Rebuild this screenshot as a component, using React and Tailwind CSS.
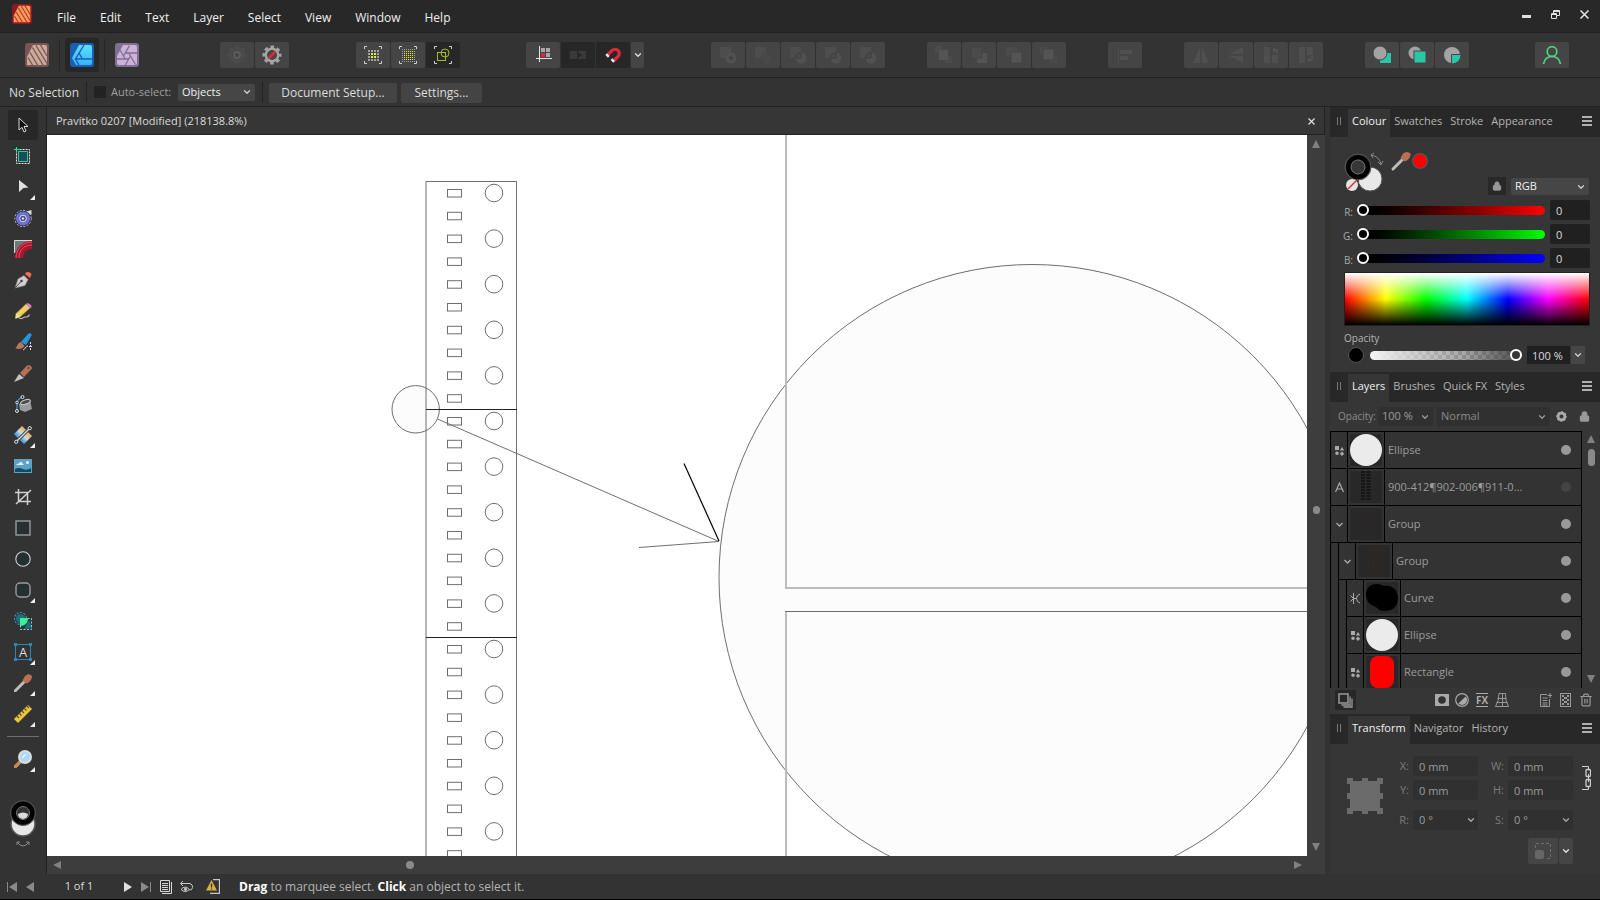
import React, { useState } from 'react';
import { ChevronDown, Lock, Trash2 } from 'lucide-react';

const menuItems = ['File', 'Edit', 'Text', 'Layer', 'Select', 'View', 'Window', 'Help'];

/* ---------- shared bits ---------- */

function ToolbarButton({ label, dark, children, narrow }) {
  return (
    <button
      aria-label={label}
      className={`h-[26px] flex items-center justify-center rounded-[2px] ${narrow ? 'w-[13px]' : 'w-[34px]'} ${
        dark ? 'bg-[#272727]' : 'bg-[#454545]'
      }`}
    >
      {children}
    </button>
  );
}

function Dropdown({ label, value, className, chevron = 'text-[#cfcfcf]' }) {
  return (
    <div className={`relative flex items-center rounded-[2px] ${className}`}>
      <select
        aria-label={label}
        defaultValue={value}
        className="appearance-none w-full h-full pl-1 pr-4 bg-transparent outline-none"
      >
        <option>{value}</option>
      </select>
      <ChevronDown className={`absolute right-[3px] w-2.5 h-2.5 pointer-events-none ${chevron}`} strokeWidth={3} />
    </div>
  );
}

function Arrow({ dir, className = 'fill-[#8a8a8a]' }) {
  const shapes = {
    up: '4,0 8,8 0,8',
    down: '0,0 8,0 4,8',
    left: '8,0 8,8 0,4',
    right: '0,0 8,4 0,8',
  };
  return (
    <svg width="8" height="8" viewBox="0 0 8 8" className={className}>
      <polygon points={shapes[dir]} />
    </svg>
  );
}

function PanelTabs({ tabs }) {
  return (
    <div className="h-[30px] shrink-0 flex items-end bg-[#282828] pr-2">
      <div className="w-[18px] h-7 pb-1 flex items-center justify-center gap-[2px]">
        <span className="w-px h-2 bg-[#777]" />
        <span className="w-px h-2 bg-[#777]" />
      </div>
      {tabs.map((tab, i) => (
        <button
          key={tab}
          className={`h-7 px-1 pb-1 text-[11px] whitespace-nowrap ${
            i === 0 ? 'bg-[#363636] text-[#f0f0f0]' : 'text-[#b4b4b4]'
          }`}
        >
          {tab}
        </button>
      ))}
      <button aria-label="Panel preferences" className="ml-auto h-7 pb-1 flex flex-col items-center justify-center gap-[2px]">
        <span className="w-2.5 h-[2px] bg-[#b0b0b0]" />
        <span className="w-2.5 h-[2px] bg-[#b0b0b0]" />
        <span className="w-2.5 h-[2px] bg-[#b0b0b0]" />
      </button>
    </div>
  );
}

/* ---------- persona logos ---------- */

function PublisherLogo({ size, bg, fg, line }) {
  return (
    <svg width={size} height={size} viewBox="0 0 24 24">
      <rect width="24" height="24" rx="3" fill={bg} />
      <path d="M8 2h12a2 2 0 0 1 2 2v16a2 2 0 0 1-2 2H2v-8z" fill={fg} />
      <path d="M7.500 4.500L18 22M5 9.500L12.500 22M11 2.500L22 20.500M3 14.500L7.500 22M15.500 2L22 13" stroke={line} strokeWidth="1.300" />
    </svg>
  );
}

function DesignerLogo() {
  return (
    <svg width="24" height="24" viewBox="0 0 24 24">
      <defs>
        <linearGradient id="designer" x1="0" y1="0" x2="0" y2="1">
          <stop offset="0" stopColor="#5fe0ff" />
          <stop offset="1" stopColor="#35b4f8" />
        </linearGradient>
      </defs>
      <rect width="24" height="24" rx="3" fill="#1a5fb4" />
      <path d="M9 2h11a2 2 0 0 1 2 2v16a2 2 0 0 1-2 2H6L2 15z" fill="url(#designer)" />
      <path d="M14 2L5.500 16H22M5.500 16L9 22M9 10l3.500 6" stroke="#1a5fb4" strokeWidth="1.400" fill="none" />
    </svg>
  );
}

function PhotoLogo() {
  return (
    <svg width="24" height="24" viewBox="0 0 24 24">
      <rect width="24" height="24" rx="3" fill="#7f6e96" />
      <path d="M8 2h12a2 2 0 0 1 2 2v16a2 2 0 0 1-2 2H4a2 2 0 0 1-2-2v-7z" fill="#ccb3d6" />
      <path
        d="M8.500 13L14.500 2.700M10.250 10H22M13.750 10l6.700 11.500M15.500 13l-5.200 9M13.750 16H2M10.250 16L5 7"
        stroke="#7f6e96"
        strokeWidth="1.300"
        fill="none"
      />
    </svg>
  );
}

/* ---------- toolbar icons ---------- */

function SelectionFrame({ children }) {
  return (
    <svg width="18" height="18" viewBox="0 0 18 18" fill="none">
      <path d="M.500 3V.500H3M15 .500h2.500V3M.500 15v2.500H3M17.500 15v2.500H15" stroke="#d0d0d0" />
      {children}
    </svg>
  );
}

function DotGrid({ count, size, pitch, start, from, to }) {
  const cells = [];
  for (let r = 0; r < count; r++) {
    for (let c = 0; c < count; c++) {
      const hot = r >= from && r <= to && c >= from && c <= to;
      cells.push(
        <rect
          key={`${r}-${c}`}
          x={start + c * pitch}
          y={start + r * pitch}
          width={size}
          height={size}
          fill={hot ? '#e3ee2c' : '#a0a0a0'}
        />
      );
    }
  }
  return <>{cells}</>;
}

function BooleanIcon({ kind }) {
  return (
    <svg width="18" height="18" viewBox="0 0 18 18">
      <rect x="1" y="1" width="11" height="11" fill="#4d4d4d" />
      <circle cx="12" cy="12" r="5.500" fill={kind === 'subtract' ? '#484848' : '#515151'} />
      {kind === 'add' && <path d="M12 9.500v5M9.500 12h5" stroke="#3c3c3c" strokeWidth="1.200" />}
      {kind !== 'add' && kind !== 'subtract' && <path d="M6.500 12h5.500V6.500a5.500 5.500 0 0 0-5.500 5.500z" fill="#4a4a4a" stroke="#3e3e3e" />}
    </svg>
  );
}

function OrderIcon({ kind }) {
  const front = '#545454';
  const back = '#4b4b4b';
  return (
    <svg width="18" height="18" viewBox="0 0 18 18">
      {kind === 0 && (
        <>
          <rect x="0" y="0" width="7" height="7" fill={back} />
          <rect x="10" y="10" width="7" height="7" fill={back} />
          <rect x="4" y="4" width="9" height="10" fill={front} />
        </>
      )}
      {kind === 1 && (
        <>
          <rect x="7" y="7" width="10" height="10" fill={front} />
          <rect x="1" y="1" width="11" height="11" fill={back} stroke="#454545" />
        </>
      )}
      {kind === 2 && (
        <>
          <rect x="1" y="1" width="11" height="10" fill={back} />
          <rect x="6" y="6" width="11" height="11" fill={front} stroke="#454545" />
        </>
      )}
      {kind === 3 && (
        <>
          <rect x="0" y="1" width="7" height="7" fill={back} />
          <rect x="10" y="10" width="7" height="7" fill={back} />
          <rect x="3" y="3" width="11" height="11" fill={front} stroke="#454545" />
        </>
      )}
    </svg>
  );
}

function FlipIcon({ kind }) {
  return (
    <svg width="18" height="18" viewBox="0 0 18 18" fill="#4f4f4f">
      {kind === 0 && <path d="M8 1v16H1zM10 1v16h7z" />}
      {kind === 1 && <path d="M16 1v7H2zM16 10v7L2 10z" />}
      {kind === 2 && (
        <>
          <path d="M2 1h6v16H2zM10 9h6v8h-6z" />
          <path d="M11 4h4v4M13 2l-2 2 2 2" fill="none" stroke="#5c5c5c" />
        </>
      )}
      {kind === 3 && (
        <>
          <path d="M2 1h6v16H2zM10 1h6v8h-6z" />
          <path d="M15 10v4h-4M13 12l-2 2 2 2" fill="none" stroke="#5c5c5c" />
        </>
      )}
    </svg>
  );
}

function GearIcon({ size = 20, className, width = 2.4, children }) {
  return (
    <svg width={size} height={size} viewBox="0 0 20 20" className={className}>
      <circle cx="10" cy="10" r="6.200" fill="none" stroke="currentColor" strokeWidth={width} />
      <circle cx="10" cy="10" r="8.300" fill="none" stroke="currentColor" strokeWidth="2.400" strokeDasharray="3.600 2.920" strokeDashoffset="1.800" />
      {children}
    </svg>
  );
}

function MainToolbar() {
  return (
    <div className="h-[45px] shrink-0 flex items-center pl-[25px] border-b border-[#222]">
      <button aria-label="Publisher persona">
        <PublisherLogo size={24} bg="#7b5355" fg="#c9aa9b" line="#7b5355" />
      </button>
      <span className="ml-[10px] w-px h-8 bg-[#262626]" />
      <button aria-label="Designer persona" className="ml-[5px] w-[34px] h-[34px] flex items-center justify-center rounded-[3px] bg-[#272727]">
        <DesignerLogo />
      </button>
      <span className="ml-[5px] w-px h-8 bg-[#262626]" />
      <button aria-label="Photo persona" className="ml-[10px]">
        <PhotoLogo />
      </button>

      <div className="ml-[81px] flex gap-px">
        <ToolbarButton label="Defaults">
          <GearIcon className="text-[#4b4b4b]">
            <circle cx="10" cy="10" r="4.500" fill="#4b4b4b" />
            <circle cx="10" cy="10" r="3" fill="#454545" stroke="#5a5a5a" strokeWidth="2" />
          </GearIcon>
        </ToolbarButton>
        <ToolbarButton label="Revert defaults">
          <GearIcon className="text-[#a6a6a6]">
            <path d="M7.500 12.500l5-5" stroke="#e0283c" strokeWidth="2.600" strokeLinecap="round" />
          </GearIcon>
        </ToolbarButton>
      </div>

      <div className="ml-[67px] flex gap-px">
        <ToolbarButton label="Show grid">
          <SelectionFrame>
            <DotGrid count={4} size={2} pitch={3} start={4} from={1} to={2} />
          </SelectionFrame>
        </ToolbarButton>
        <ToolbarButton label="Pixel grid">
          <SelectionFrame>
            <DotGrid count={7} size={1} pitch={2} start={3} from={1} to={5} />
          </SelectionFrame>
        </ToolbarButton>
        <ToolbarButton label="Select objects" dark>
          <SelectionFrame>
            <rect x="3.500" y="6.500" width="8" height="8" stroke="#a5bb2a" />
            <circle cx="11" cy="7" r="4" stroke="#a5bb2a" />
          </SelectionFrame>
        </ToolbarButton>
      </div>

      <div className="ml-[66px] flex gap-px">
        <ToolbarButton label="Transform origin">
          <svg width="18" height="18" viewBox="0 0 18 18">
            <path d="M5.500 0v16M2 12.500h16" stroke="#e4e4e4" />
            <path d="M7 2h4v4H7zM12 2h4v4h-4zM12 7h4v4h-4z" fill="#a8a8a8" />
            <path d="M7 7h4v4H7z" fill="#e0283c" />
          </svg>
        </ToolbarButton>
        <ToolbarButton label="Move by whole pixels" dark>
          <svg width="18" height="18" viewBox="0 0 18 18">
            <path d="M1 5h7v8H1zM9 5h8v8H9z" fill="#3a3a3a" />
            <path d="M9 6l4 3-4 3z" fill="#272727" />
          </svg>
        </ToolbarButton>
        <ToolbarButton label="Snapping" dark>
          <svg width="18" height="18" viewBox="0 0 18 18" fill="none">
            <path d="M4 8.500L8 4.500a4.200 4.200 0 0 1 6 6L9.500 15" stroke="#e0283c" strokeWidth="3.200" />
            <path d="M2.200 8.200l2.600 2.600M7.500 13.200l2.600 2.600" stroke="#e8e8e8" strokeWidth="2.400" />
          </svg>
        </ToolbarButton>
        <ToolbarButton label="Snapping options" narrow>
          <ChevronDown className="w-2.5 h-2.5 text-[#e0e0e0]" strokeWidth={3} />
        </ToolbarButton>
      </div>

      <div className="ml-[67px] flex gap-px">
        {['add', 'subtract', 'intersect', 'xor', 'divide'].map((kind) => (
          <ToolbarButton key={kind} label={kind}>
            <BooleanIcon kind={kind} />
          </ToolbarButton>
        ))}
      </div>

      <div className="ml-[42px] flex gap-px">
        {['Move to back', 'Back one', 'Forward one', 'Move to front'].map((label, i) => (
          <ToolbarButton key={label} label={label}>
            <OrderIcon kind={i} />
          </ToolbarButton>
        ))}
      </div>

      <div className="ml-[42px] flex">
        <ToolbarButton label="Alignment">
          <svg width="18" height="18" viewBox="0 0 18 18">
            <path d="M2.500 1v16" stroke="#4f4f4f" />
            <path d="M4 4h12v4H4zM4 10h8v4H4z" fill="#505050" />
          </svg>
        </ToolbarButton>
      </div>

      <div className="ml-[42px] flex gap-px">
        {['Flip horizontal', 'Flip vertical', 'Rotate left', 'Rotate right'].map((label, i) => (
          <ToolbarButton key={label} label={label}>
            <FlipIcon kind={i} />
          </ToolbarButton>
        ))}
      </div>

      <div className="ml-[42px] flex gap-px">
        <ToolbarButton label="Insert behind">
          <svg width="18" height="18" viewBox="0 0 18 18">
            <rect x="7" y="7" width="11" height="10" fill="#29c7a6" />
            <circle cx="7" cy="7" r="7" fill="#a3a3a3" stroke="#454545" />
          </svg>
        </ToolbarButton>
        <ToolbarButton label="Insert on top">
          <svg width="18" height="18" viewBox="0 0 18 18">
            <circle cx="7" cy="7" r="6.500" fill="#a3a3a3" />
            <rect x="6" y="5" width="12" height="12" fill="#29c7a6" stroke="#454545" />
          </svg>
        </ToolbarButton>
        <ToolbarButton label="Insert inside">
          <svg width="18" height="18" viewBox="0 0 18 18">
            <circle cx="9" cy="9" r="8" fill="#a3a3a3" />
            <path d="M8.500 8.500H18a9 9 0 0 1-9.500 9.500z" fill="#29c7a6" stroke="#454545" />
          </svg>
        </ToolbarButton>
      </div>

      <div className="ml-auto mr-[31px]">
        <ToolbarButton label="Account">
          <svg width="20" height="20" viewBox="0 0 20 20" fill="none" stroke="#4fd184" strokeWidth="1.700">
            <circle cx="10" cy="6.500" r="4.800" />
            <path d="M1.500 19c1-5 4-7.500 8.500-7.500s7.500 2.500 8.500 7.500" />
          </svg>
        </ToolbarButton>
      </div>
    </div>
  );
}

function ContextBar() {
  return (
    <div className="h-[29px] shrink-0 flex items-center pl-[9px] border-b border-[#222] text-xs text-[#dcdcdc]">
      <span className="w-[77px] pt-px whitespace-nowrap">No Selection</span>
      <span className="w-px h-5 bg-[#222]" />
      <label className="ml-[7px] flex items-center gap-[5px] text-[#a0a0a0] whitespace-nowrap w-[78px] text-[11px]">
        <input type="checkbox" className="appearance-none w-3 h-3 bg-[#222] rounded-[1px] shrink-0" />
        Auto-select:
      </label>
      <Dropdown label="Auto-select" value="Objects" className="ml-[6px] w-[77px] h-[17px] bg-[#464646] text-[#f0f0f0] text-[11px]" />
      <span className="ml-[7px] w-px h-5 bg-[#222]" />
      <button className="ml-[6px] mt-px w-32 h-5 bg-[#444] rounded-[2px]">Document Setup...</button>
      <button className="ml-1 mt-px w-[81px] h-5 bg-[#444] rounded-[2px]">Settings...</button>
    </div>
  );
}

/* ---------- tools column ---------- */

const tools = [
  {
    name: 'Move',
    active: true,
    icon: <path d="M5 2v12l3-2.700 2 4.700 2-1-2-4.500h4z" fill="#111" stroke="#d8d8d8" />,
  },
  {
    name: 'Artboard',
    icon: (
      <>
        <rect x="2.500" y="2.500" width="13" height="14" fill="none" stroke="#e6e6e6" strokeDasharray="2 1" />
        <rect x="4.500" y="4.500" width="9" height="10" fill="#1b4d59" stroke="#29c7a6" />
        <path d="M2.500 0v5M0 2.500h5" stroke="#29e0a6" />
      </>
    ),
  },
  { name: 'Node', flyout: true, icon: <path d="M5 2l9.500 7.500-5 .5-4.500 4z" fill="#e0e0e0" /> },
  {
    name: 'Point transform',
    icon: (
      <>
        <circle cx="9" cy="9.500" r="8.200" fill="none" stroke="#c0c0c0" strokeDasharray="2 1.500" />
        <circle cx="9" cy="9.500" r="7" fill="#6a70e0" />
        <circle cx="9" cy="9.500" r="3.300" fill="#4e4e60" stroke="#d8d8e8" />
        <circle cx="9" cy="9.500" r="1.200" fill="#d8d8e8" />
        <path d="M12.500 2.500l5-1.500v5z" fill="#ddd" />
      </>
    ),
  },
  {
    name: 'Corner',
    icon: (
      <>
        <path d="M.500 13V.500H18" fill="#6b7a7a" stroke="#d8d8d8" />
        <path d="M1 18C1 8 8 1 18 1v8c-5 0-9 4-9 9z" fill="#a8172c" />
        <path d="M2 18C2 9 9 2 18 2M5 18C5 10 10 5 18 5" fill="none" stroke="#ea4a5c" />
      </>
    ),
  },
  {
    name: 'Pen',
    icon: (
      <>
        <path d="M1 17l3-9 6-3.500 4 4-3 6z" fill="#cfcfcf" stroke="#8b8b8b" strokeWidth=".6" />
        <path d="M1 17l6-6.500" stroke="#444" />
        <circle cx="7.500" cy="10" r="1.300" fill="#444" />
        <path d="M12 1.500c2-1.500 5 0 5.500 2L16 7l-5-4z" fill="#ff6b4f" />
      </>
    ),
  },
  {
    name: 'Pencil',
    icon: (
      <>
        <path d="M5 16c4 2 4-1.500 7-1 2 0 3-1 3.500-2.500" fill="none" stroke="#aaa" strokeWidth="1.200" />
        <path d="M2 11.500L12 2l4 4-10 9-4.500 1.500z" fill="#ecd25c" stroke="#a98d2c" strokeWidth=".6" />
        <path d="M2 11.500l4 3.500-4.500 1.500z" fill="#f0dcc0" />
        <path d="M12 2c1-2 6 .500 5.500 3L16 6.500z" fill="#e07ad8" />
      </>
    ),
  },
  {
    name: 'Vector brush',
    icon: (
      <>
        <path d="M7 9L14 1c2-1.500 4-.5 3.500 1.500L12 12z" fill="#2196e3" />
        <path d="M1 15c3-.5 1-4.500 6-6l3.500 4c-2 3-6 4-9.500 2z" fill="#b9775a" />
        <path d="M9 17c2 0 2-4 5-4" fill="none" stroke="#ccc" />
        <path d="M16.500 9v9" stroke="#ddd" strokeDasharray="2 1" />
        <path d="M15 13.500h3" stroke="#ddd" />
      </>
    ),
  },
  {
    name: 'Knife',
    icon: (
      <>
        <path d="M0 18l5-8 5 4z" fill="#c4c4c4" />
        <path d="M6 9l7-7.500c2-1 5 0 5 3L10 13z" fill="#b5714f" />
        <circle cx="14.500" cy="4" r="1" fill="#444" />
      </>
    ),
  },
  {
    name: 'Fill bucket',
    icon: (
      <>
        <path d="M5 9l11-4 2 9-7 3-5-2z" fill="#9a9a9a" />
        <ellipse cx="11.500" cy="7" rx="5" ry="2.200" transform="rotate(-18 11.500 7)" fill="#4c4c4c" stroke="#d0d0d0" />
        <path d="M3 15V8q0-3 5-6" fill="none" stroke="#3b8fc4" strokeWidth="1.400" />
        <circle cx="3" cy="16" r="1.500" fill="#333" stroke="#ddd" />
        <circle cx="3" cy="7.500" r="1.300" fill="#333" stroke="#ddd" />
        <circle cx="8.500" cy="2" r="1.500" fill="#333" stroke="#ddd" />
      </>
    ),
  },
  {
    name: 'Gradient',
    flyout: true,
    icon: (
      <>
        <defs>
          <linearGradient id="strip" x1="0" y1="1" x2="1" y2="0">
            <stop offset=".25" stopColor="#4da8e6" />
            <stop offset=".5" stopColor="#cfdbe0" />
            <stop offset=".75" stopColor="#e8b77c" />
          </linearGradient>
        </defs>
        <path d="M0 8l8-8 4 4-8 8z" fill="url(#strip)" />
        <path d="M6 14l8-8 4 4-8 8z" fill="url(#strip)" />
        <path d="M3 15L15 3" stroke="#444" strokeWidth="3" />
        <path d="M3 15L15 3" stroke="#ddd" strokeWidth="1.200" />
        <circle cx="2.200" cy="15.800" r="1.600" fill="#333" stroke="#ddd" />
        <circle cx="15.800" cy="2.200" r="1.600" fill="#333" stroke="#ddd" />
      </>
    ),
  },
  {
    name: 'Place image',
    icon: (
      <>
        <rect x="0" y="2" width="18" height="14" fill="#5ba2c6" />
        <path d="M2 8q1-2 3-1.500Q7 3 9 7l1 1z" fill="#e4e9ec" />
        <circle cx="13.500" cy="5.500" r="1.500" fill="#f2f2f2" />
        <path d="M1 12q4-2 8 0t8-1v4H1z" fill="#134b63" />
      </>
    ),
  },
  {
    name: 'Crop',
    icon: <path d="M4.500 1v12.500H17M1 4.500h12.500V17M2 16L17 2" fill="none" stroke="#d0d0d0" strokeWidth="1.500" />,
  },
  { name: 'Rectangle', icon: <rect x="2" y="2" width="14" height="14" fill="#243032" stroke="#9a9a9a" strokeWidth="1.400" /> },
  { name: 'Ellipse', icon: <circle cx="9" cy="9" r="7.200" fill="#243032" stroke="#d0d0d0" strokeWidth="1.100" /> },
  {
    name: 'Rounded rectangle',
    flyout: true,
    icon: <rect x="2" y="2" width="14" height="14" rx="4" fill="#243032" stroke="#9a9a9a" strokeWidth="1.400" />,
  },
  {
    name: 'Shape builder',
    icon: (
      <>
        <path d="M15 8l3 8-8 1z" fill="#1d6f80" />
        <circle cx="6.500" cy="6.500" r="4.500" fill="#1d6f80" />
        <circle cx="6.500" cy="6.500" r="6" fill="none" stroke="#3f93b4" strokeWidth="1.200" strokeDasharray="2 1.400" />
        <rect x="6.500" y="6.500" width="11" height="11" fill="none" stroke="#8fd0f4" strokeDasharray="2 1.500" />
        <path d="M6 14V6h8c0 5-3 8-8 8z" fill="#3bf193" />
      </>
    ),
  },
  {
    name: 'Artistic text',
    flyout: true,
    icon: (
      <>
        <rect x="1.500" y="1.500" width="15" height="15" fill="none" stroke="#2c86b8" />
        <path d="M0 0h3v3H0zM15 0h3v3h-3zM0 15h3v3H0zM15 15h3v3h-3z" fill="#2c86b8" />
        <text x="9" y="13.500" textAnchor="middle" fontSize="13" fill="#dcdcdc">A</text>
      </>
    ),
  },
  {
    name: 'Colour picker',
    flyout: true,
    icon: (
      <>
        <path d="M1 17l9-9" stroke="#bcbcbc" strokeWidth="3" strokeLinecap="round" />
        <path d="M8.500 6.500L11 2q4-3.500 7 0c0 4-3 7-6 7.500z" fill="#b87252" />
      </>
    ),
  },
  {
    name: 'Measure',
    flyout: true,
    icon: (
      <>
        <path d="M0 14L14 0l4 4L4 18z" fill="#e9c63f" />
        <path d="M3 11l2 2M5.500 8.500l2 2M8 6l2 2M10.500 3.500l2 2M13 1l2 2" stroke="#5a4a12" strokeWidth="1.200" />
      </>
    ),
  },
];

function ToolButton({ name, icon, flyout, active }) {
  return (
    <button
      aria-label={name}
      className={`relative w-[30px] h-[30px] shrink-0 flex items-center justify-center rounded-[3px] ${active ? 'bg-[#272727]' : ''}`}
    >
      <svg width="18" height="18" viewBox="0 0 18 18">
        {icon}
      </svg>
      {flyout && (
        <svg width="5" height="5" viewBox="0 0 5 5" className="absolute right-[3px] bottom-[2px]">
          <path d="M5 0v5H0z" fill="#f0f0f0" />
        </svg>
      )}
    </button>
  );
}

function ToolsColumn() {
  return (
    <div className="w-[47px] shrink-0 flex flex-col items-center gap-px pt-[3px] border-r border-[#222] overflow-hidden">
      {tools.map((tool) => (
        <ToolButton key={tool.name} {...tool} />
      ))}
      <span className="mt-[6px] mb-[6px] w-8 h-px shrink-0 bg-[#6e6e6e]" />
      <ToolButton
        name="Zoom"
        flyout
        icon={
          <>
            <path d="M1 17l5-5" stroke="#c48a55" strokeWidth="3.500" strokeLinecap="round" />
            <circle cx="11" cy="7" r="6" fill="#a8d8fa" stroke="#dcdcdc" strokeWidth="2" />
            <path d="M8 8l4-4" stroke="#e8f6ff" strokeWidth="1.500" />
          </>
        }
      />
      <button aria-label="Stroke and fill" className="mt-6">
        <svg width="28" height="52" viewBox="0 0 28 52">
          <circle cx="14" cy="25" r="12" fill="#e8e8e8" stroke="#555" strokeWidth="1.500" />
          <circle cx="14" cy="14" r="12.500" fill="#333" stroke="#555" />
          <circle cx="14" cy="14" r="9" fill="#333" stroke="#000" strokeWidth="5" />
          <path d="M9 15q5-3 10 0a5 5 0 0 1-10 0z" fill="#ddd" />
          <circle cx="14" cy="14" r="6.500" fill="none" stroke="#777" />
          <path d="M8 43q6 8 12 0M8 46v-3h3M17 43h3v3" fill="none" stroke="#8a8a8a" />
        </svg>
      </button>
    </div>
  );
}

/* ---------- document ---------- */

function Artwork() {
  const slots = Array.from({ length: 30 }, (_, i) => 54.5 + i * 22.8);
  const holes = Array.from({ length: 15 }, (_, i) => 58 + i * 45.6);
  return (
    <svg width="100%" height="100%" fill="none" stroke="#6e6e6e" className="block">
      <circle cx="985" cy="442.500" r="313" fill="#fcfcfc" />
      <circle cx="368.700" cy="274.300" r="23.700" fill="#fcfcfc" />
      <path d="M739 0v453h2000" stroke="#bcbcbc" strokeWidth="2" />
      <path d="M739 2000V476" stroke="#bcbcbc" strokeWidth="2" />
      <path d="M738 476.500h2000" />
      <path d="M379 2000V46.500h90.500V2000" />
      <path d="M379 274.500h91M379 502.500h91" stroke="#222" />
      {slots.map((y) => (
        <rect key={y} x="400.500" y={y} width="14" height="7.500" />
      ))}
      {holes.map((y) => (
        <circle key={y} cx="447" cy={y} r="8.800" />
      ))}
      <path d="M390.500 284L672 406.500L592 412.500" />
      <path d="M637 328.500L672 406" stroke="#000" strokeWidth="1.200" />
    </svg>
  );
}

function DocumentArea() {
  return (
    <div className="flex-1 min-w-0 flex flex-col">
      <div className="h-7 shrink-0 flex items-center justify-between pl-[9px] pr-[9px] pt-[2px] bg-[#363636] border-b border-r border-[#222] text-[11px] text-[#dcdcdc]">
        <span>Pravítko 0207 [Modified] (218138.8%)</span>
        <button aria-label="Close document">
          <svg width="7" height="7" viewBox="0 0 7 7" stroke="#e0e0e0" strokeWidth="1.200">
            <path d="M.500.500l6 6M6.500.500l-6 6" />
          </svg>
        </button>
      </div>
      <div className="flex-1 min-h-0 flex">
        <main className="flex-1 min-w-0 bg-white overflow-hidden">
          <Artwork />
        </main>
        <div className="w-[18px] shrink-0 flex flex-col items-center py-[5px] bg-[#3d3d3d]">
          <button aria-label="Scroll up"><Arrow dir="up" className="fill-[#808080] block" /></button>
          <span className="h-[calc(50%+2px)]" />
          <span className="w-[7px] h-2 rounded-full bg-[#8a8a8a]" />
          <button aria-label="Scroll down" className="mt-auto"><Arrow dir="down" className="fill-[#808080] block" /></button>
        </div>
      </div>
      <div className="h-[18px] shrink-0 flex items-center pl-[6px] pr-[23px] bg-[#3d3d3d]">
        <button aria-label="Scroll left"><Arrow dir="left" className="fill-[#808080] block" /></button>
        <span className="w-[calc(28%-5px)]" />
        <span className="w-2 h-2 rounded-full bg-[#8a8a8a]" />
        <button aria-label="Scroll right" className="ml-auto"><Arrow dir="right" className="fill-[#808080] block" /></button>
      </div>
    </div>
  );
}

/* ---------- colour panel ---------- */

function ChannelSlider({ id, track, value, onChange }) {
  return (
    <div className="h-6 flex items-center">
      <label htmlFor={`channel-${id}`} className="w-[23px] pt-1 text-right text-[10px] text-[#a8a8a8]">
        {id}:
      </label>
      <input
        id={`channel-${id}`}
        type="range"
        min="0"
        max="255"
        value={value}
        onChange={(e) => onChange(Number(e.target.value))}
        className={`appearance-none ml-1 flex-1 min-w-0 h-[9px] rounded-full bg-linear-to-r from-black ${track} [&::-webkit-slider-thumb]:appearance-none [&::-webkit-slider-thumb]:w-3 [&::-webkit-slider-thumb]:h-3 [&::-webkit-slider-thumb]:rounded-full [&::-webkit-slider-thumb]:border-2 [&::-webkit-slider-thumb]:border-white [&::-webkit-slider-thumb]:bg-black`}
      />
      <input
        aria-label={`${id} value`}
        value={value}
        onChange={(e) => onChange(Number(e.target.value) || 0)}
        className="ml-[5px] w-10 h-5 pl-[6px] rounded-[2px] bg-[#202020] text-[11px] text-[#dcdcdc]"
      />
    </div>
  );
}

function ColourPanel() {
  const [rgb, setRgb] = useState({ R: 0, G: 0, B: 0 });
  const tracks = { R: 'to-[#ff0000]', G: 'to-[#00ff00]', B: 'to-[#0000ff]' };

  return (
    <section className="shrink-0 pb-2">
      <PanelTabs tabs={['Colour', 'Swatches', 'Stroke', 'Appearance']} />
      <div className="pr-[10px]">
        <div className="h-[61px] flex items-end pl-[14px] pr-px">
          <svg width="86" height="46" viewBox="0 0 86 46" className="mb-[2px]">
            <circle cx="26" cy="29" r="12" fill="#e8e8e8" stroke="#555" />
            <circle cx="14" cy="17" r="13" fill="#363636" stroke="#555" />
            <circle cx="14" cy="17" r="9.500" fill="#363636" stroke="#000" strokeWidth="5" />
            <circle cx="14" cy="17" r="7" fill="none" stroke="#777" />
            <circle cx="8" cy="35" r="6" fill="#e4e4e4" />
            <path d="M4 39l8-8" stroke="#e0283c" strokeWidth="1.500" />
            <path d="M27 5q8 1 10 9M30 3l-3 2 2 3M34 12l3 3 2-4" fill="none" stroke="#8a8a8a" />
            <path d="M49 19l9-9" stroke="#bcbcbc" strokeWidth="3" strokeLinecap="round" />
            <path d="M56.500 8L59 3.500q4-3 7.500 0c.500 4-3 7-6 8z" fill="#b87252" />
            <circle cx="76" cy="11" r="8" fill="#555" />
            <circle cx="76" cy="11" r="6.800" fill="#f00" />
          </svg>
          <button aria-label="Lock colour" className="ml-auto w-[18px] h-[18px] mb-[3px] flex items-center justify-center bg-[#282828]">
            <Lock className="w-2.5 h-2.5 text-[#999] fill-[#999]" strokeWidth={2} />
          </button>
          <Dropdown label="Colour mode" value="RGB" className="ml-[5px] mb-[3px] w-[78px] h-[17px] bg-[#464646] text-[#f0f0f0] text-[11px]" />
        </div>
        {Object.keys(tracks).map((id) => (
          <ChannelSlider key={id} id={id} track={tracks[id]} value={rgb[id]} onChange={(v) => setRgb({ ...rgb, [id]: v })} />
        ))}
        <div className="mt-[2px] ml-[14px] h-[54px] border border-[#222] bg-[linear-gradient(to_bottom,#fff_0%,transparent_50%,#000_100%),linear-gradient(to_right,#f00,#ff0,#0f0,#0ff,#00f,#f0f,#f00)]" />
        <label htmlFor="opacity" className="mt-1 ml-[14px] block text-[10px] leading-4 text-[#b4b4b4]">
          Opacity
        </label>
        <div className="h-[18px] flex items-center pl-[18px] pr-[5px]">
          <span className="w-4 h-4 rounded-full border border-[#555] bg-black" />
          <input
            id="opacity"
            type="range"
            defaultValue="100"
            className="appearance-none ml-[6px] flex-1 min-w-0 h-[9px] rounded-full bg-[linear-gradient(to_right,#f4f4f4,#f4f4f433_60%,#363636cc),repeating-conic-gradient(#999_0_25%,#777_0_50%)] bg-[length:100%_100%,8px_8px] [&::-webkit-slider-thumb]:appearance-none [&::-webkit-slider-thumb]:w-3 [&::-webkit-slider-thumb]:h-3 [&::-webkit-slider-thumb]:rounded-full [&::-webkit-slider-thumb]:border-2 [&::-webkit-slider-thumb]:border-white [&::-webkit-slider-thumb]:bg-[#363636]"
          />
          <input aria-label="Opacity value" defaultValue="100 %" className="ml-[5px] w-[43px] h-[18px] pl-[5px] bg-[#202020] text-[11px] text-[#dcdcdc]" />
          <button aria-label="Opacity options" className="ml-px w-[14px] h-[18px] flex items-center justify-center bg-[#464646]">
            <ChevronDown className="w-2.5 h-2.5 text-[#cfcfcf]" strokeWidth={3} />
          </button>
        </div>
      </div>
    </section>
  );
}

/* ---------- layers panel ---------- */

const shapeIcon = <path d="M1 1h4v4H1zM8 2l2.200 3.500H5.800zM3 6.500a1.800 1.800 0 1 1 0 3.600 1.800 1.800 0 0 1 0-3.600zM8 6.500l2.200 2.200L8 11 5.800 8.700z" fill="#aaa" />;
const chevronIcon = <path d="M2.500 4l3 3 3-3" fill="none" stroke="#aaa" strokeWidth="1.300" />;

const layers = [
  { name: 'Ellipse', depth: 0, icon: shapeIcon, thumb: <circle cx="16" cy="16" r="16" fill="#ebebeb" /> },
  {
    name: '900-412¶902-006¶911-0...',
    depth: 0,
    hidden: true,
    icon: <path d="M1.500 10L5.500 1l4 9M3 7h5" fill="none" stroke="#aaa" strokeWidth="1.200" />,
    thumb: <path d="M13 0v30M18.500 0v30" stroke="#161616" strokeWidth="4" strokeDasharray="2 1" />,
  },
  { name: 'Group', depth: 0, icon: chevronIcon, thumb: <path d="M15.500 0v32" stroke="#302424" /> },
  {
    name: 'Group',
    depth: 1,
    icon: chevronIcon,
    thumb: <path d="M10.500 0v32M22.500 0v32M14.500 1v31M19.500 3v29" stroke="#402222" strokeDasharray="3 2" />,
  },
  {
    name: 'Curve',
    depth: 2,
    icon: <path d="M10 1Q6.500 2 6.500 5.500T10 10M3.500 0v11M3.500 5.500h3M.500 2.500l3 3-3 3" fill="none" stroke="#aaa" />,
    thumb: <path d="M0 13C0 5 5 2 11 2q4 0 7 2c8-1 14 4 14 12s-5 13-13 13q-6 0-9-4Q0 22 0 13z" fill="#000" />,
  },
  { name: 'Ellipse', depth: 2, icon: shapeIcon, thumb: <circle cx="16" cy="16" r="16" fill="#ebebeb" /> },
  { name: 'Rectangle', depth: 2, icon: shapeIcon, thumb: <rect x="4" width="24" height="32" rx="8" fill="#f00" /> },
];

function LayerRow({ name, depth, icon, thumb, hidden }) {
  return (
    <li className="h-[37px] shrink-0 flex border-l border-black">
      {Array.from({ length: depth }, (_, i) => (
        <span key={i} className="w-2 h-full shrink-0 border-r border-black" />
      ))}
      <div className="flex-1 min-w-0 flex items-center border-b border-black">
        <span className="w-[17px] h-full shrink-0 flex items-center justify-center border-r border-black">
          <svg width="11" height="11" viewBox="0 0 11 11">{icon}</svg>
        </span>
        <span className="w-[37px] h-full shrink-0 flex items-center justify-center border-r border-black">
          <svg width="32" height="32" viewBox="0 0 32 32" className="bg-[#282828]">{thumb}</svg>
        </span>
        <span className="pl-[3px] flex-1 min-w-0 whitespace-nowrap text-[11px] text-[#9c9c9c]">{name}</span>
        <button
          aria-label={`Toggle ${name}`}
          className={`mr-[10px] w-[10px] h-[10px] shrink-0 rounded-full ${hidden ? 'bg-[#444]' : 'bg-[#999]'}`}
        />
      </div>
    </li>
  );
}

function LayersPanel() {
  return (
    <section className="flex-1 min-h-0 flex flex-col">
      <PanelTabs tabs={['Layers', 'Brushes', 'Quick FX', 'Styles']} />
      <div className="h-[29px] shrink-0 flex items-center pl-2 pr-[10px] text-[11px] text-[#8c8c8c]">
        <span className="w-10 text-[10px]">Opacity:</span>
        <Dropdown label="Layer opacity" value="100 %" chevron="text-[#999]" className="w-[55px] h-[19px] bg-[#303030] text-[#9c9c9c]" />
        <Dropdown label="Blend mode" value="Normal" chevron="text-[#999]" className="ml-1 flex-1 min-w-0 h-[19px] bg-[#303030]" />
        <button aria-label="Blend ranges" className="ml-[6px]">
          <GearIcon size={11} width={5} className="text-[#aaa]" />
        </button>
        <button aria-label="Lock layer" className="ml-[12px]">
          <Lock className="w-[11px] h-[11px] text-[#999] fill-[#999]" strokeWidth={2.5} />
        </button>
      </div>
      <div className="flex-1 min-h-0 flex">
        <ul className="flex-1 min-w-0 flex flex-col overflow-hidden border-t border-r border-black bg-[#333]">
          {layers.map((layer, i) => (
            <LayerRow key={i} {...layer} />
          ))}
        </ul>
        <div className="w-[18px] flex flex-col items-center pt-1 pb-[5px]">
          <button aria-label="Scroll layers up"><Arrow dir="up" className="fill-[#808080] block" /></button>
          <span className="mt-[6px] w-[7px] h-[17px] rounded-full bg-[#8a8a8a]" />
          <button aria-label="Scroll layers down" className="mt-auto"><Arrow dir="down" className="fill-[#808080] block" /></button>
        </div>
      </div>
      <div className="h-[26px] shrink-0 flex items-center pl-[5px] pr-[7px] pb-[2px]">
        <button aria-label="Edit all layers" className="w-[21px] h-5 flex items-center justify-center bg-[#272727]">
          <svg width="15" height="15" viewBox="0 0 15 15" fill="none" stroke="#999">
            <path d="M5.500 14H14V5.500M3.500 12H12V3.500" strokeWidth="1.300" />
            <rect x="1" y="1" width="9" height="9" strokeWidth="1.500" />
          </svg>
        </button>
        <div className="ml-auto flex items-center gap-[6px]">
          <button aria-label="Mask layer">
            <svg width="14" height="14" viewBox="0 0 14 14"><rect y="1" width="14" height="12" fill="#aaa" /><circle cx="7" cy="7" r="3.800" fill="#333" /></svg>
          </button>
          <button aria-label="Adjustments">
            <svg width="14" height="14" viewBox="0 0 14 14"><circle cx="7" cy="7" r="6.300" fill="none" stroke="#aaa" strokeWidth="1.200" /><path d="M10.600 3.400a5 5 0 0 1-7.200 7.200z" fill="#aaa" /></svg>
          </button>
          <button aria-label="Layer effects">
            <svg width="14" height="14" viewBox="0 0 14 14">
              <path d="M1 .500h12M1 13.500h12" stroke="#aaa" />
              <text x="7" y="11" textAnchor="middle" fontSize="10" fontWeight="700" fill="#aaa">FX</text>
            </svg>
          </button>
          <button aria-label="Live filters">
            <svg width="14" height="14" viewBox="0 0 14 14" fill="none" stroke="#999">
              <path d="M4 .500h6.500Q10 8 13.500 13.500H.500Q4 8 4 .500zM7.500.500v13M2.500 5.500h9M1.500 9.500h11" />
            </svg>
          </button>
        </div>
        <div className="ml-[31px] flex items-center gap-[8px]">
          <button aria-label="Add layer">
            <svg width="12" height="14" viewBox="0 0 12 14" fill="none" stroke="#999"><path d="M7 1.500H.500v12h9V6M2.500 5h5M2.500 7.500h5M2.500 10h5M2.500 12h5M10 0v5M7.500 2.500h5" /></svg>
          </button>
          <button aria-label="Add pixel layer">
            <svg width="11" height="14" viewBox="0 0 11 14"><rect x=".5" y=".5" width="10" height="13" fill="none" stroke="#999" /><path d="M2 2h2v2H2zM7 2h2v2H7zM4 4h3v2H4zM2 6h2v2H2zM7 6h2v2H7zM4 8h3v2H4zM2 10h2v2H2zM7 10h2v2H7z" fill="#999" /></svg>
          </button>
          <button aria-label="Delete layer">
            <Trash2 className="w-[14px] h-[14px] text-[#999]" />
          </button>
        </div>
      </div>
    </section>
  );
}

/* ---------- transform panel ---------- */

function TransformField({ id, value, dropdown }) {
  return (
    <div className="flex items-center text-[11px] text-[#7c7c7c]">
      <label htmlFor={`transform-${id}`} className="w-[26px] pr-1 text-right">{id}:</label>
      {dropdown ? (
        <div className="relative flex items-center w-[65px] h-5 rounded-[2px] bg-[#303030]">
          <select id={`transform-${id}`} className="appearance-none w-full h-full pl-[6px] text-[#9c9c9c]">
            <option>{value}</option>
          </select>
          <ChevronDown className="absolute right-[2px] w-2.5 h-2.5 pointer-events-none text-[#aaa]" strokeWidth={3} />
        </div>
      ) : (
        <input id={`transform-${id}`} defaultValue={value} className="w-[65px] h-5 pl-[6px] rounded-[2px] bg-[#303030] text-[#9c9c9c]" />
      )}
    </div>
  );
}

function TransformPanel() {
  return (
    <section className="h-40 shrink-0">
      <PanelTabs tabs={['Transform', 'Navigator', 'History']} />
      <div className="flex pt-3 pl-[17px] pr-[9px]">
        <svg width="36" height="36" viewBox="0 0 36 36" className="mt-[22px]" fill="#6b6b6b">
          <path d="M0 0h6v3h9V0h6v3h9V0h6v6h-3v9h3v6h-3v9h3v6h-6v-3h-9v3h-6v-3H6v3H0v-6h3v-9H0v-6h3V6H0z" />
        </svg>
        <div className="ml-auto">
          <div className="grid grid-cols-[auto_auto] gap-x-1 gap-y-1">
            <TransformField id="X" value="0 mm" />
            <TransformField id="W" value="0 mm" />
            <TransformField id="Y" value="0 mm" />
            <TransformField id="H" value="0 mm" />
          </div>
          <div className="mt-[10px] grid grid-cols-[auto_auto] gap-x-1">
            <TransformField id="R" value="0 °" dropdown />
            <TransformField id="S" value="0 °" dropdown />
          </div>
          <div className="mt-2 flex justify-end gap-px">
            <button aria-label="Transform objects separately" className="w-[30px] h-[26px] flex items-center justify-center rounded-[2px] bg-[#454545]">
              <svg width="16" height="16" viewBox="0 0 16 16"><rect y="7" width="9" height="9" rx="2" fill="#666" /><path d="M.500 5V.500h15v15H11" fill="none" stroke="#6e6e6e" strokeDasharray="3 2" /></svg>
            </button>
            <button aria-label="Transform options" className="w-[14px] h-[26px] flex items-center justify-center rounded-[2px] bg-[#454545]">
              <ChevronDown className="w-2.5 h-2.5 text-[#e0e0e0]" strokeWidth={3} />
            </button>
          </div>
        </div>
        <button aria-label="Lock aspect ratio" className="ml-[9px] mt-[10px] self-start">
          <svg width="9" height="24" viewBox="0 0 9 24" fill="none" stroke="#d0d0d0">
            <path d="M0 .500h6.500V3M0 23.500h6.500V21M6.500 8v8" />
            <rect x="4" y="3.500" width="4.500" height="7" rx="1" strokeWidth="1.300" />
            <rect x="4" y="13.500" width="4.500" height="7" rx="1" strokeWidth="1.300" />
          </svg>
        </button>
      </div>
    </section>
  );
}

/* ---------- status bar ---------- */

function StatusBar() {
  return (
    <footer className="h-[26px] shrink-0 flex items-center pl-[7px] border-b border-black text-[11px]">
      <button aria-label="First page">
        <svg width="10" height="10" viewBox="0 0 10 10" fill="#8a8a8a"><path d="M0 0h1v10H0zM10 0v10L2 5z" /></svg>
      </button>
      <button aria-label="Previous page" className="ml-[9px]">
        <svg width="8" height="10" viewBox="0 0 8 10" fill="#8a8a8a"><path d="M8 0v10L0 5z" /></svg>
      </button>
      <span className="w-[90px] text-center text-[#dcdcdc]">1 of 1</span>
      <button aria-label="Next page">
        <svg width="8" height="10" viewBox="0 0 8 10" fill="#e0e0e0"><path d="M0 0v10l8-5z" /></svg>
      </button>
      <button aria-label="Last page" className="ml-[9px]">
        <svg width="10" height="10" viewBox="0 0 10 10" fill="#8a8a8a"><path d="M9 0h1v10H9zM0 0v10l8-5z" /></svg>
      </button>
      <button aria-label="Pages" className="ml-[9px]">
        <svg width="12" height="14" viewBox="0 0 12 14" fill="none" stroke="#d8d8d8"><path d="M.500.500h9v11h-9zM2 3.500h6M2 5.500h6M2 7.500h6M2 9.500h6M11.500 2v11.500H2" /></svg>
      </button>
      <button aria-label="Preflight preview" className="ml-2">
        <svg width="13" height="12" viewBox="0 0 13 12" fill="none" stroke="#c8c8c8"><path d="M3 0L.500 2.500 3 5M.500 2.500H10q3 1 2.500 4t-3 2.500" /><path d="M1 8.500q4-5 8.500 0-4.500 4-8.500 0z" /><circle cx="5.500" cy="8.300" r="1.200" fill="#c8c8c8" /></svg>
      </button>
      <button aria-label="Preflight" className="ml-[13px]">
        <svg width="14" height="15" viewBox="0 0 14 15"><path d="M7 .500h6.500v14H4" fill="none" stroke="#c8c8c8" strokeWidth="1.300" /><path d="M5.500 1l5.500 10.500H0z" fill="#d9b044" /><path d="M5.500 4.500v4M5.500 9.500v1" stroke="#3a3010" strokeWidth="1.300" /></svg>
      </button>
      <p className="ml-[19px] text-xs text-[#b4b4b4] whitespace-nowrap">
        <b className="text-white">Drag</b> to marquee select. <b className="text-white">Click</b> an object to select it.
      </p>
    </footer>
  );
}

function TitleBar() {
  return (
    <header className="h-[33px] shrink-0 flex items-center pl-3 pr-[11px] bg-[#282828] border-b border-[#202020]">
      <span className="mb-1">
        <PublisherLogo size={20} bg="#8c1a24" fg="#ff9a52" line="#a5383a" />
      </span>
      <nav className="ml-[13px] flex">
        {menuItems.map((item) => (
          <button key={item} className="px-3 pt-1 text-xs text-[#f0f0f0]">{item}</button>
        ))}
      </nav>
      <div className="ml-auto mb-1 flex items-center gap-5">
        <button aria-label="Minimise">
          <svg width="9" height="10" viewBox="0 0 9 10" fill="#e0e0e0"><path d="M0 6h9v3H0z" /></svg>
        </button>
        <button aria-label="Restore">
          <svg width="9" height="9" viewBox="0 0 9 9" fill="none" stroke="#e0e0e0"><path d="M.500 3.500h5v5h-5zM.500 4.500h5M2.500 3V.500h6v5H6M2.500 1.500h6" /></svg>
        </button>
        <button aria-label="Close">
          <svg width="9" height="9" viewBox="0 0 9 9" stroke="#e8e8e8" strokeWidth="1.500"><path d="M.500.500l8 8M8.500.500l-8 8" /></svg>
        </button>
      </div>
    </header>
  );
}

export default function App() {
  return (
    <div className="h-screen flex flex-col overflow-hidden bg-[#333] font-['Open_Sans','Noto_Sans',sans-serif] select-none">
      <TitleBar />
      <MainToolbar />
      <ContextBar />
      <div className="flex-1 min-h-0 flex">
        <ToolsColumn />
        <DocumentArea />
        <aside className="w-[270px] ml-[5px] shrink-0 flex flex-col bg-[#363636]">
          <ColourPanel />
          <LayersPanel />
          <TransformPanel />
        </aside>
      </div>
      <StatusBar />
    </div>
  );
}
